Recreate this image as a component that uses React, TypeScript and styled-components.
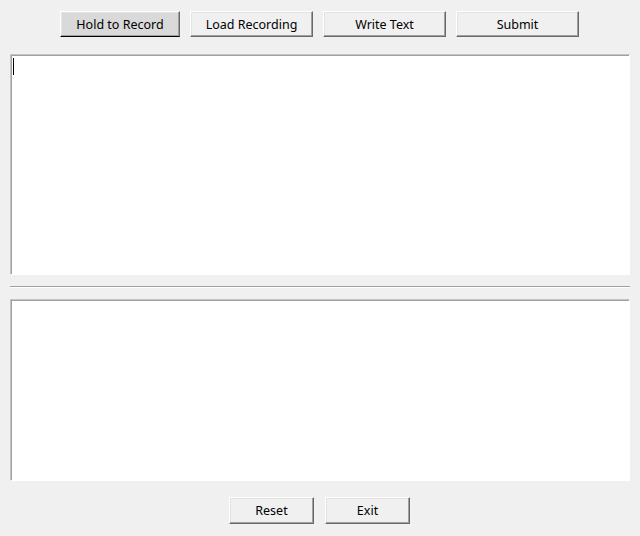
import React from "react";
import styled, { createGlobalStyle } from "styled-components";

const Global = createGlobalStyle`
  html, body { margin: 0; padding: 0; background: #f0f0f0; }
  body { font-family: "Noto Sans", "Open Sans", sans-serif; }
`;

const Window = styled.div`
  width: 640px;
  height: 536px;
  background: #f0f0f0;
  display: flex;
  flex-direction: column;
  box-sizing: border-box;
  overflow: hidden;
`;

const ButtonRow = styled.div<{ $top: number; $gap: number; $shift?: number }>`
  display: flex;
  justify-content: center;
  gap: ${(p) => p.$gap}px;
  margin-top: ${(p) => p.$top}px;
  padding-right: ${(p) => p.$shift ?? 0}px;
`;

const TkButton = styled.button<{ $w: number; $h: number; $active?: boolean }>`
  width: ${(p) => p.$w}px;
  height: ${(p) => p.$h}px;
  box-sizing: border-box;
  padding: 2px 0 0 0;
  margin: 0;
  font-family: "Noto Sans", "Open Sans", sans-serif;
  font-size: 12.5px;
  color: #000;
  background: ${(p) => (p.$active ? "#d9d9d9" : "#f0f0f0")};
  border-style: solid;
  border-width: 1px;
  border-color: #ffffff #696969 ${(p) => (p.$active ? "#000" : "#696969")} #ffffff;
  box-shadow: inset -1px -1px 0 #a0a0a0, inset 1px 1px 0 #e3e3e3;
  display: flex;
  align-items: center;
  justify-content: center;
  line-height: 1;
  cursor: default;
`;

const TextPane = styled.div<{ $h: number; $top: number }>`
  margin: ${(p) => p.$top}px 10px 0 10px;
  height: ${(p) => p.$h}px;
  box-sizing: border-box;
  background: #ffffff;
  border-style: solid;
  border-width: 1px;
  border-color: #c4c4c4 #ffffff #ffffff #c4c4c4;
  box-shadow: inset 1px 1px 0 #a0a0a0;
  padding: 3px 2px;
`;

const Caret = styled.span`
  display: block;
  width: 1px;
  height: 17px;
  background: #000;
`;

const Separator = styled.div`
  margin: 11px 10px 0 10px;
  height: 1px;
  background: #a0a0a0;
  border-bottom: 1px solid #ffffff;
`;

export default function App() {
  return (
    <>
      <Global />
      <Window>
        <ButtonRow $top={11} $gap={10} $shift={1}>
          <TkButton $w={120} $h={26} $active>
            Hold to Record
          </TkButton>
          <TkButton $w={123} $h={26}>Load Recording</TkButton>
          <TkButton $w={123} $h={26}>Write Text</TkButton>
          <TkButton $w={123} $h={26}>Submit</TkButton>
        </ButtonRow>
        <TextPane $top={17} $h={221}>
          <Caret />
        </TextPane>
        <Separator />
        <TextPane $top={11} $h={182} />
        <ButtonRow $top={16} $gap={11} $shift={1}>
          <TkButton $w={85} $h={27}>Reset</TkButton>
          <TkButton $w={85} $h={27}>Exit</TkButton>
        </ButtonRow>
      </Window>
    </>
  );
}
